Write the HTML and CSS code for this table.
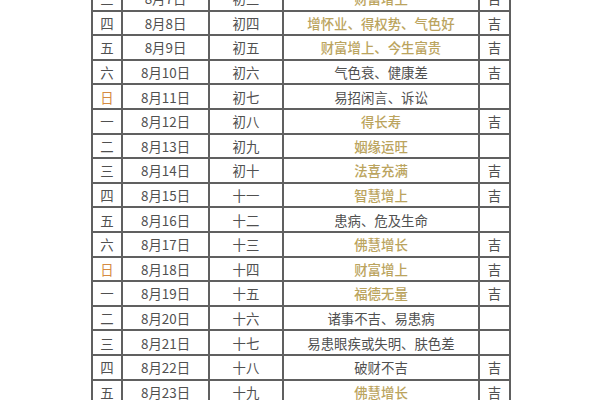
FILE: index.html
```html
<!DOCTYPE html>
<html lang="zh">
<head>
<meta charset="utf-8">
<link rel="stylesheet" href="styles.css">
</head>
<body>
<table class="cal">
<colgroup><col class="c-wk"><col class="c-date"><col class="c-lunar"><col class="c-desc"><col class="c-ji"></colgroup>
<tbody>
<tr><td>三</td><td>8月7日</td><td>初三</td><td class="gold">财富增上</td><td>吉</td></tr>
<tr><td>四</td><td>8月8日</td><td>初四</td><td class="gold">增怀业、得权势、气色好</td><td>吉</td></tr>
<tr><td>五</td><td>8月9日</td><td>初五</td><td class="gold">财富增上、今生富贵</td><td>吉</td></tr>
<tr><td>六</td><td>8月10日</td><td>初六</td><td>气色衰、健康差</td><td>吉</td></tr>
<tr><td class="sun">日</td><td>8月11日</td><td>初七</td><td>易招闲言、诉讼</td><td></td></tr>
<tr><td>一</td><td>8月12日</td><td>初八</td><td class="gold">得长寿</td><td>吉</td></tr>
<tr><td>二</td><td>8月13日</td><td>初九</td><td class="gold">姻缘运旺</td><td></td></tr>
<tr><td>三</td><td>8月14日</td><td>初十</td><td class="gold">法喜充满</td><td>吉</td></tr>
<tr><td>四</td><td>8月15日</td><td>十一</td><td class="gold">智慧增上</td><td>吉</td></tr>
<tr><td>五</td><td>8月16日</td><td>十二</td><td>患病、危及生命</td><td></td></tr>
<tr><td>六</td><td>8月17日</td><td>十三</td><td class="gold">佛慧增长</td><td>吉</td></tr>
<tr><td class="sun">日</td><td>8月18日</td><td>十四</td><td class="gold">财富增上</td><td>吉</td></tr>
<tr><td>一</td><td>8月19日</td><td>十五</td><td class="gold">福德无量</td><td>吉</td></tr>
<tr><td>二</td><td>8月20日</td><td>十六</td><td>诸事不吉、易患病</td><td></td></tr>
<tr><td>三</td><td>8月21日</td><td>十七</td><td>易患眼疾或失明、肤色差</td><td></td></tr>
<tr><td>四</td><td>8月22日</td><td>十八</td><td>破财不吉</td><td>吉</td></tr>
<tr><td>五</td><td>8月23日</td><td>十九</td><td class="gold">佛慧增长</td><td>吉</td></tr>
</tbody>
</table>
</body>
</html>
```
FILE: styles.css
```css
html, body {
  margin: 0;
  padding: 0;
  background: #ffffff;
  overflow: hidden;
}
.cal {
  margin: -15px 0 0 91px;
  border-collapse: collapse;
  table-layout: fixed;
  width: 418px;
  font-family: "Noto Sans CJK SC", "Noto Sans", sans-serif;
  font-size: 13.4px;
  color: #505050;
}
.c-wk { width: 30px; }
.c-date { width: 87px; }
.c-lunar { width: 74px; }
.c-desc { width: 196px; }
.c-ji { width: 31px; }
.cal tr {
  height: 24.6px;
}
.cal td {
  border: 2px solid #606060;
  padding: 0;
  text-align: center;
  line-height: 18px;
  white-space: nowrap;
}
.cal td.gold {
  color: #bba45e;
  font-weight: 500;
}
.cal td.sun {
  color: #d58a42;
}
```
